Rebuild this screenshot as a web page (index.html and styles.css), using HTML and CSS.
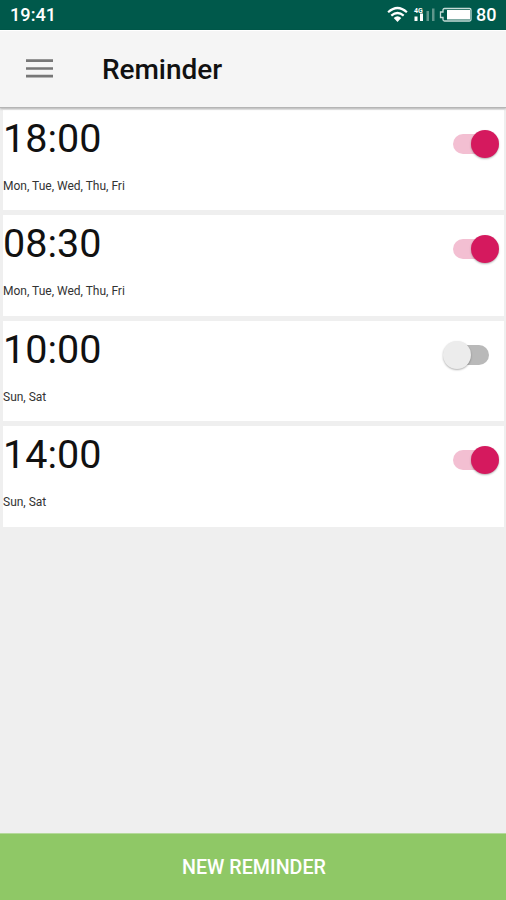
FILE: index.html
```html
<!DOCTYPE html>
<html lang="en">
<head>
<meta charset="utf-8">
<title>Reminder</title>
<link rel="stylesheet" href="styles.css">
</head>
<body>
<div class="screen">
  <div class="status">
    <span class="clock">19:41</span>
    <svg class="status-icons" width="88" height="30" viewBox="0 0 88 30">
      <g fill="none" stroke="#fff" stroke-width="2.2">
        <path d="M1.1 12.2Q10.500 3.800 19.900 12.200"/>
        <path d="M4.300 15.700Q10.500 10.300 16.700 15.700"/>
      </g>
      <path d="M6.700 17.900Q10.500 14.800 14.300 17.900L10.500 22Z" fill="#fff"/>
      <text class="network" x="27" y="12.500">4G</text>
      <path d="M27.500 16.500h3v4.500h-3zM33 13.500h3v7.500h-3z" fill="#fff"/>
      <path d="M39.500 11h2.500v10h-2.500zM45 8.500h2.500V21H45z" fill="#5f968b"/>
      <path d="M57.500 8.500H82.500Q84 8.500 84 10V19.500Q84 21 82.500 21H57.500Q56 21 56 19.500V17.500H53.500V12H56V10Q56 8.500 57.500 8.500Z" fill="none" stroke="#c5dcd7" stroke-width="1.300"/>
      <rect x="60" y="10" width="23" height="9.500" fill="#fff"/>
    </svg>
    <span class="percent">80</span>
  </div>
  <header class="appbar">
    <svg class="menu" width="27" height="19" viewBox="0 0 27 19"><path d="M0 1.700h27M0 9.500h27M0 17.200h27" stroke="#777" stroke-width="2.700"/></svg>
    <h1 class="title">Reminder</h1>
  </header>
  <main class="list">
    <section class="card">
      <div><div class="time">18:00</div><div class="days">Mon, Tue, Wed, Thu, Fri</div></div>
      <div class="switch on"><span class="thumb"></span></div>
    </section>
    <section class="card">
      <div><div class="time">08:30</div><div class="days">Mon, Tue, Wed, Thu, Fri</div></div>
      <div class="switch on"><span class="thumb"></span></div>
    </section>
    <section class="card">
      <div><div class="time">10:00</div><div class="days">Sun, Sat</div></div>
      <div class="switch"><span class="thumb"></span></div>
    </section>
    <section class="card">
      <div><div class="time">14:00</div><div class="days">Sun, Sat</div></div>
      <div class="switch on"><span class="thumb"></span></div>
    </section>
  </main>
  <button class="new">NEW REMINDER</button>
</div>
</body>
</html>
```
FILE: styles.css
```css
* { box-sizing: border-box; }
body { margin: 0; font-family: Roboto, "Liberation Sans", sans-serif; }
.screen { width: 506px; height: 900px; display: flex; flex-direction: column; background: #efefef; overflow: hidden; }
.status { height: 30px; flex: none; display: flex; align-items: center; padding: 0 9px 0 10px; background: #00594b; color: #fff; }
.clock { font-size: 18.200px; font-weight: 500; line-height: 30px; }
.status-icons { margin-left: auto; }
.network { font-size: 7px; font-weight: 700; fill: #fff; }
.percent { width: 21px; margin-left: 1px; font-size: 18px; font-weight: 500; line-height: 30px; }
.appbar { height: 78px; flex: none; display: flex; align-items: center; padding-left: 26px; background: #f5f5f5; border-top: 1px solid #fff; border-bottom: 1px solid #b5b5b5; box-shadow: 0 1px 2px rgba(0, 0, 0, .25); z-index: 1; }
.menu { flex: none; margin-top: -2px; }
.title { margin: 1px 0 0 49px; font-size: 28px; font-weight: 500; line-height: 32px; letter-spacing: -.05px; color: #111; }
.list { flex: 1; display: flex; flex-direction: column; gap: 5.3px; padding: 2px 2px 0 3px; }
.card { height: 100.200px; display: flex; justify-content: space-between; background: #fff; }
.time { margin: 6px 0 0 0; font-size: 39.500px; line-height: 46px; color: #111; }
.days { margin-top: 17px; font-size: 12px; line-height: 14px; color: #333; }
.switch { width: 36px; height: 20px; margin: 24px 15px 0 0; border-radius: 10px; background: #b9b9b9; display: flex; align-items: center; }
.thumb { flex: none; width: 28px; height: 28px; margin-left: -10px; border-radius: 50%; background: #ececec; box-shadow: 0 1px 2px rgba(0, 0, 0, .3); }
.on { background: #f3bfd2; justify-content: flex-end; }
.on .thumb { margin: 0 -10px 0 0; background: #d5195e; }
.new { height: 67px; flex: none; border: 0; border-top: 1px solid #b5d99b; background: #8fc866; color: #fff; font-family: inherit; font-size: 19.700px; font-weight: 500; padding: 1px 0 0 2px; }
```
